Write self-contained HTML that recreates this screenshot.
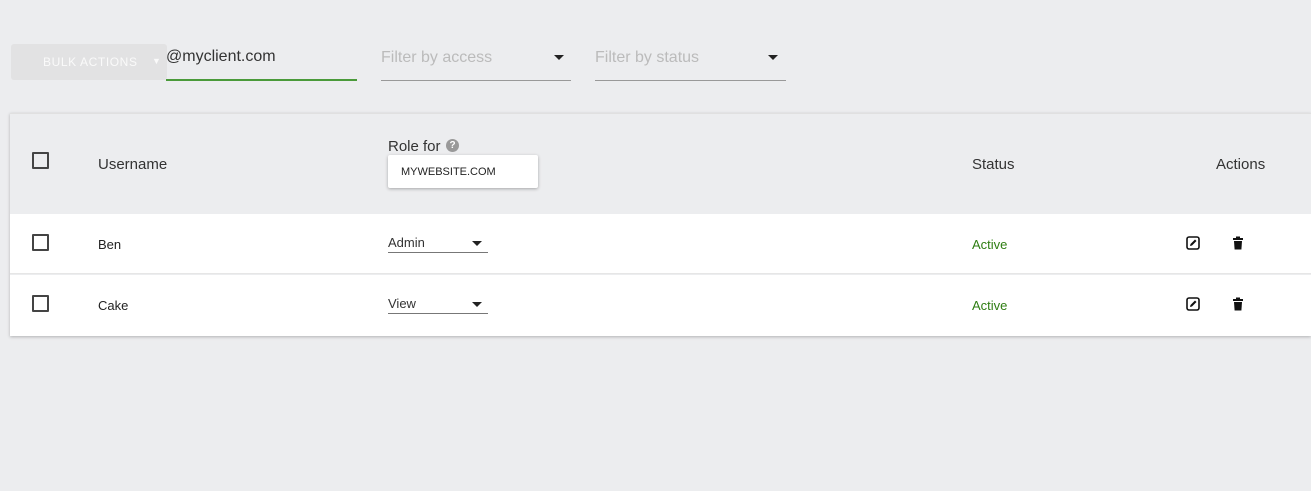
<!DOCTYPE html>
<html><head><style>
*{margin:0;padding:0;box-sizing:border-box}
body{width:1311px;height:491px;background:#ecedef;font-family:"Liberation Sans",sans-serif;position:relative;overflow:hidden;color:#333}
.a{position:absolute}
.cb{position:absolute;left:32px;width:17px;height:17px;border:2px solid #444;border-radius:1px;background:#fff}
.t13{font-size:13px;color:#222}
.sel{position:absolute;left:388px;width:100px;height:20px;border-bottom:1px solid #777;font-size:13px;color:#333;padding-top:2px}
.sel:after{content:"";position:absolute;right:6px;top:8px;border-left:5px solid transparent;border-right:5px solid transparent;border-top:5px solid #222}
.act{position:absolute;left:972px;font-size:13px;color:#2e7d12}
</style></head><body>
<div class="a" style="left:11px;top:44px;width:156px;height:36px;background:#e2e2e3;border-radius:3px"></div>
<div class="a" style="left:43px;top:55px;font-size:12px;letter-spacing:0.6px;color:#fafafa">BULK ACTIONS</div>
<div class="a" style="left:152px;top:56px;font-size:9px;color:#fafafa">▼</div>
<div class="a" style="left:166px;top:48px;font-size:16px;color:#333">@myclient.com</div>
<div class="a" style="left:166px;top:79px;width:191px;height:2px;background:#4a9a3a"></div>
<div class="a" style="left:381px;top:49px;font-size:16px;color:#bbb">Filter by access</div>
<div class="a" style="left:381px;top:80px;width:190px;height:1px;background:#999"></div>
<div class="a" style="left:554px;top:55px;border-left:5px solid transparent;border-right:5px solid transparent;border-top:5px solid #222"></div>
<div class="a" style="left:595px;top:49px;font-size:16px;color:#bbb">Filter by status</div>
<div class="a" style="left:595px;top:80px;width:191px;height:1px;background:#999"></div>
<div class="a" style="left:768px;top:55px;border-left:5px solid transparent;border-right:5px solid transparent;border-top:5px solid #222"></div>

<div class="a" style="left:10px;top:113px;width:1301px;height:223px;box-shadow:0 1px 3px rgba(0,0,0,.25);background:#ecedef;border-top:1px solid #e0e0e0"></div>
<div class="cb" style="top:152px;background:transparent"></div>
<div class="a" style="left:98px;top:156px;font-size:15px">Username</div>
<div class="a" style="left:388px;top:138px;font-size:15px">Role for</div>
<div class="a" style="left:446px;top:139px;width:13px;height:13px;border-radius:50%;background:#999;color:#fff;font-size:10px;text-align:center;line-height:13px;font-weight:bold">?</div>
<div class="a" style="left:388px;top:155px;width:150px;height:33px;background:#fff;border-radius:2px;box-shadow:0 1px 3px rgba(0,0,0,.3);font-size:11px;color:#222;padding:11px 0 0 13px">MYWEBSITE.COM</div>
<div class="a" style="left:972px;top:156px;font-size:15px">Status</div>
<div class="a" style="left:1216px;top:156px;font-size:15px">Actions</div>

<div class="a" style="left:10px;top:214px;width:1301px;height:60px;background:#fff;border-bottom:1px solid #e6e6e6"></div>
<div class="a" style="left:10px;top:275px;width:1301px;height:61px;background:#fff"></div>

<div class="cb" style="top:234px"></div>
<div class="a t13" style="left:98px;top:237px">Ben</div>
<div class="sel" style="top:233px">Admin</div>
<div class="act" style="top:237px">Active</div>
<div class="cb" style="top:295px"></div>
<div class="a t13" style="left:98px;top:298px">Cake</div>
<div class="sel" style="top:294px">View</div>
<div class="act" style="top:298px">Active</div>

<svg class="a" style="left:1186px;top:236px" width="14" height="14" viewBox="0 0 14 14"><rect x="1" y="1" width="12" height="12" rx="2" fill="none" stroke="#111" stroke-width="1.6"/><path d="M4 10 L4.5 8 L9 3.5 L10.5 5 L6 9.5Z" fill="#111"/></svg>
<svg class="a" style="left:1232px;top:236px" width="12" height="14" viewBox="0 0 12 14"><rect x="1" y="2" width="10" height="2" fill="#111"/><rect x="4" y="0.5" width="4" height="2" fill="#111"/><path d="M2 5H10L9.4 13.5H2.6Z" fill="#111"/></svg>
<svg class="a" style="left:1186px;top:297px" width="14" height="14" viewBox="0 0 14 14"><rect x="1" y="1" width="12" height="12" rx="2" fill="none" stroke="#111" stroke-width="1.6"/><path d="M4 10 L4.5 8 L9 3.5 L10.5 5 L6 9.5Z" fill="#111"/></svg>
<svg class="a" style="left:1232px;top:297px" width="12" height="14" viewBox="0 0 12 14"><rect x="1" y="2" width="10" height="2" fill="#111"/><rect x="4" y="0.5" width="4" height="2" fill="#111"/><path d="M2 5H10L9.4 13.5H2.6Z" fill="#111"/></svg>
</body></html>
